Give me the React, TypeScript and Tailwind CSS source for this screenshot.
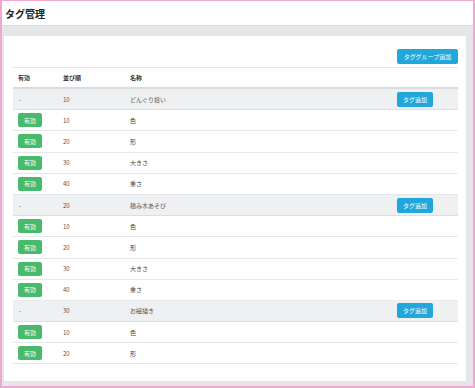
import React from "react";

type Row = { kind: "group" | "tag"; order: string; name: string };

const rows: Row[] = [
  { kind: "group", order: "10", name: "どんぐり拾い" },
  { kind: "tag", order: "10", name: "色" },
  { kind: "tag", order: "20", name: "形" },
  { kind: "tag", order: "30", name: "大きさ" },
  { kind: "tag", order: "40", name: "重さ" },
  { kind: "group", order: "20", name: "積み木あそび" },
  { kind: "tag", order: "10", name: "色" },
  { kind: "tag", order: "20", name: "形" },
  { kind: "tag", order: "30", name: "大きさ" },
  { kind: "tag", order: "40", name: "重さ" },
  { kind: "group", order: "30", name: "お絵描き" },
  { kind: "tag", order: "10", name: "色" },
  { kind: "tag", order: "20", name: "形" },
];

const font = {
  fontFamily: '"Noto Sans CJK JP", "Noto Sans", "Liberation Sans", sans-serif',
};

export default function App() {
  return (
    <div
      className="w-[475px] h-[388px] border-l-2 border-t border-r-2 border-b-2 border-[#f2a7cf] flex flex-col overflow-hidden"
      style={font}
    >
      <div className="h-[25px] shrink-0 bg-white border-b border-[#d9dadc] flex items-center pl-[3px]">
        <span className="text-[10px] font-bold text-[#222]">タグ管理</span>
      </div>
      <div className="flex-1 bg-[#e5e6e8] pt-[10px] pl-[2px] pr-[7px] pb-[5px] flex">
        <div className="flex-1 bg-white pl-[9px] pr-[8px] pt-[13px] flex flex-col">
          <div className="flex justify-end mb-[3px]">
            <div className="h-[15px] w-[61px] bg-[#22a7db] rounded-[2px] text-white text-[6px] flex items-center justify-center">
              タググループ追加
            </div>
          </div>
          <div className="grid grid-cols-[45px_67px_1fr_66px] h-[22px] border-t border-[#e6e8ea] border-b-2 border-b-[#d9dcdf] items-center text-[6px] font-bold text-[#333]">
            <div className="pl-[5px]">有効</div>
            <div className="pl-[5px]">並び順</div>
            <div className="pl-[5px]">名称</div>
            <div />
          </div>
          {rows.map((r, i) =>
            r.kind === "group" ? (
              <div
                key={i}
                className="grid grid-cols-[45px_67px_1fr_66px] h-[21.2px] bg-[#eff0f2] border-b border-[#dcdfe2] items-center text-[6px] text-[#555]"
              >
                <div className="pl-[6px]">-</div>
                <div className="pl-[5px]">{r.order}</div>
                <div className="pl-[5px]">{r.name}</div>
                <div className="pl-[5px]">
                  <div className="h-[15px] w-[36px] bg-[#22a7db] rounded-[2px] text-white text-[6px] flex items-center justify-center">
                    タグ追加
                  </div>
                </div>
              </div>
            ) : (
              <div
                key={i}
                className="grid grid-cols-[45px_67px_1fr_66px] h-[21.2px] bg-white border-b border-[#e6e8ea] items-center text-[6px] text-[#555]"
              >
                <div className="pl-[5px]">
                  <div className="h-[14px] w-[24px] bg-[#48ba6b] rounded-[2px] text-white text-[6px] flex items-center justify-center">
                    有効
                  </div>
                </div>
                <div className="pl-[5px]">{r.order}</div>
                <div className="pl-[5px] text-[#444]">{r.name}</div>
                <div />
              </div>
            )
          )}
        </div>
      </div>
    </div>
  );
}
